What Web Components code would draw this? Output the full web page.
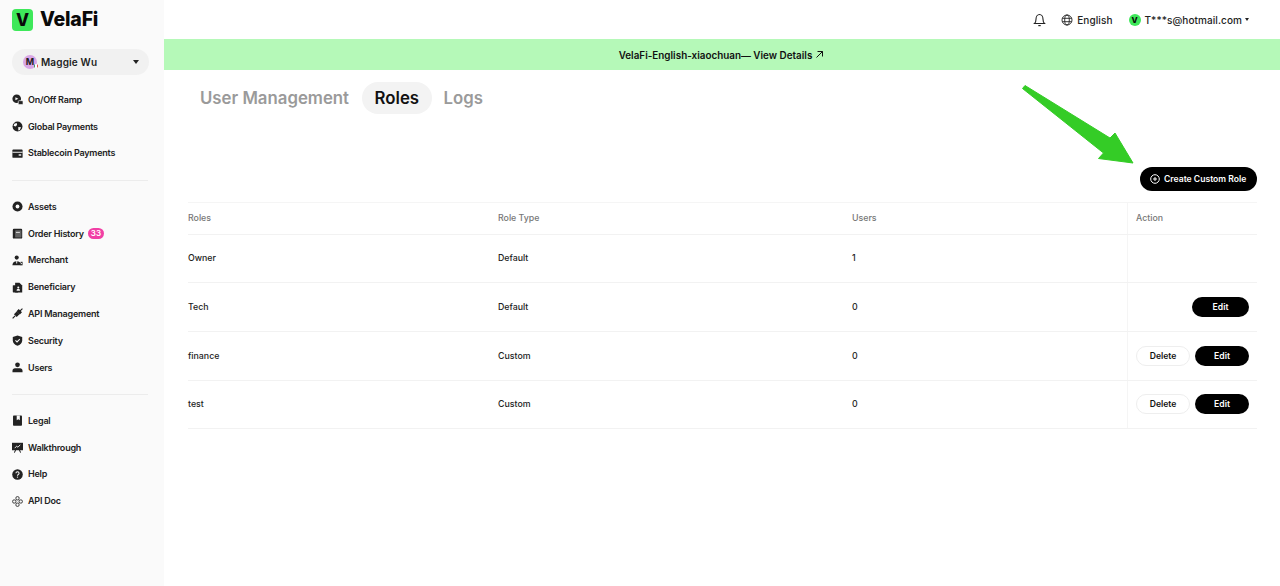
<!DOCTYPE html>
<html lang="en">
<head>
<meta charset="utf-8">
<title>VelaFi Roles</title>
<style>
html, body { margin: 0; height: 100%; }
body { font-family: Inter, "Noto Sans", sans-serif; color: #111; background: #fff; overflow: hidden; }
</style>
</head>
<body>
<app-shell>
  <side-bar slot="side">
    <nav-item icon="ramp">On/Off Ramp</nav-item>
    <nav-item icon="globe">Global Payments</nav-item>
    <nav-item icon="card">Stablecoin Payments</nav-item>
    <nav-rule></nav-rule>
    <nav-item icon="assets">Assets</nav-item>
    <nav-item icon="orders" badge="33">Order History</nav-item>
    <nav-item icon="merchant">Merchant</nav-item>
    <nav-item icon="beneficiary">Beneficiary</nav-item>
    <nav-item icon="api">API Management</nav-item>
    <nav-item icon="shield">Security</nav-item>
    <nav-item icon="user">Users</nav-item>
    <nav-rule></nav-rule>
    <nav-item icon="book">Legal</nav-item>
    <nav-item icon="board">Walkthrough</nav-item>
    <nav-item icon="help">Help</nav-item>
    <nav-item icon="doc">API Doc</nav-item>
  </side-bar>
  <top-bar></top-bar>
  <notice-banner>VelaFi-English-xiaochuan— View Details</notice-banner>
  <roles-page></roles-page>
</app-shell>

<script>
const ICONS = {
  ramp: '<circle cx="6" cy="6" r="5.5"/><path d="M4.300 4 8.100 6 4.300 8z" fill="#fafafa"/><rect x="8" y="8.500" width="6" height="4.800" rx="1" stroke="#fafafa" stroke-width=".8"/>',
  globe: '<circle cx="7" cy="7" r="6.300"/><path d="M3 3.500 6 2.500 6.500 5 4.500 7 2 6zM8 7.500l3.500.5-1.500 3.500-2 .5z" fill="#fafafa"/>',
  card: '<rect x=".5" y="2" width="13" height="10.500" rx="1.200"/><rect x=".5" y="4.800" width="13" height="1.200" fill="#fafafa"/><rect x="8.500" y="8" width="3.200" height="1.800" fill="#fafafa"/>',
  assets: '<circle cx="7" cy="7" r="6.400"/><circle cx="7" cy="7" r="2.400" fill="#fafafa"/>',
  orders: '<rect x="1" y="1" width="12" height="12.500" rx="1.500"/><rect x="4" y="3" width="8" height="9" rx=".6" fill="#fafafa" opacity=".3"/><rect x="5" y="5" width="5" height="1" fill="#fafafa"/>',
  merchant: '<circle cx="6" cy="3.300" r="2.600"/><path d="M.5 13c0-3.200 2.200-5.200 5.500-5.200s5.500 2 5.500 5.200z"/><rect x="5.400" y="7.800" width="1.200" height="3" fill="#fafafa"/><rect x="11.300" y="9" width="2.300" height="3.800" fill="none" stroke="#222" stroke-width=".7"/>',
  beneficiary: '<path d="M4 .8h5.500l3.500 3.500v9H4z"/><rect x="1" y="4" width="7" height="9.300" rx=".8"/><circle cx="8" cy="7" r="1.300" fill="#fafafa"/><path d="M5.800 11c0-1.400 1-2.300 2.200-2.300s2.200.9 2.200 2.300z" fill="#fafafa"/>',
  api: '<path d="M.8 13.300 4 10M10 4l3.300-3.300" stroke="#222" stroke-width="1.500" fill="none"/><path d="M2.500 8 6 4.500 9.500 8 6 11.500zM5.800 4 8.500 1.300 12.700 5.500 10 8.200z"/>',
  shield: '<path d="M7 .5 13 2.600V7c0 3.200-2.600 5.500-6 6.700C3.600 12.500 1 10.200 1 7V2.600z"/><path d="M4.400 6.800 6.400 8.800 9.900 5.200" fill="none" stroke="#fafafa" stroke-width="1.300"/>',
  user: '<circle cx="7" cy="3.600" r="3"/><path d="M.6 13.200V11c0-1.900 1.400-3.200 3.200-3.200h6.400c1.800 0 3.200 1.300 3.200 3.200v2.200z"/>',
  book: '<rect x="1.300" y=".7" width="11.400" height="13" rx="1"/><path d="M6 .7h4v6L8 5.300 6 6.700z" fill="#fafafa"/>',
  board: '<path d="M0 1h14v9.500H0z"/><path d="M3.500 7.800 6 5.200l1.500 1.500L10.500 3.500" fill="none" stroke="#fafafa" stroke-width="1.100"/><path d="M3 13.500l1.600-3.300M11 13.500 9.400 10.200" stroke="#222" stroke-width="1.300"/>',
  help: '<circle cx="7" cy="7" r="6.700"/><path d="M5 5.400C5 4.200 6 3.600 7 3.600s2 .7 2 1.800-.9 1.500-1.400 1.900c-.4.3-.6.6-.6 1.200" fill="none" stroke="#fafafa" stroke-width="1.300"/><circle cx="7" cy="10.300" r=".9" fill="#fafafa"/>',
  doc: '<g fill="none" stroke="#222" stroke-width="1.100"><rect x="5" y=".8" width="4" height="4.200" rx="1.600"/><rect x="5" y="9" width="4" height="4.200" rx="1.600"/><rect x=".8" y="5" width="4.200" height="4" rx="1.600"/><rect x="9" y="5" width="4.200" height="4" rx="1.600"/></g>'
}

class AppShell extends HTMLElement {
  constructor() {
    super()
    this.attachShadow({ mode: 'open' }).innerHTML = `
    <style>
    :host { display: grid; grid-template-columns: 164px 1fr; grid-template-rows: 39px 31px 1fr; height: 586px; }
    ::slotted(side-bar) { grid-row: 1 / 4; }
    </style>
    <slot name="side"></slot>
    <slot></slot>`
  }
}

class SideBar extends HTMLElement {
  constructor() {
    super()
    this.attachShadow({ mode: 'open' }).innerHTML = `
    <style>
    :host { display: block; background: #fafafa; box-sizing: border-box; padding: 8px 12px 0; height: 586px; }
    .logo { display: flex; align-items: center; gap: 7px; height: 23px; margin-bottom: 18px; }
    .mark { width: 21px; height: 22px; border-radius: 4px; background: #3ee85a; color: #0a0a0a; font: 800 17px/22px Inter, sans-serif; text-align: center; }
    .name { font: 800 19.5px/23px Inter, sans-serif; color: #0a0a0a; letter-spacing: -.2px; }
    .account { display: flex; align-items: center; height: 26px; padding: 0 10px 0 11px; border-radius: 13px; background: #f1f1f1; margin-bottom: 11.500px; width: 137px; box-sizing: border-box; }
    .ava { position: relative; width: 14px; height: 14px; border-radius: 50%; background: #d9a6e6; font: 700 9px/14px Inter, sans-serif; text-align: center; color: #222; margin-right: 4px; }
    .ava i { position: absolute; right: -1px; bottom: 1px; width: 4px; height: 4px; border-radius: 50%; background: linear-gradient(90deg,#2a9d4a 33%,#fff 33% 66%,#d33 66%); }
    .who { flex: 1; font: 600 10px/26px Inter, sans-serif; color: #222; letter-spacing: .15px; }
    .caret { width: 0; height: 0; border-left: 3px solid transparent; border-right: 3px solid transparent; border-top: 4px solid #222; }
    </style>
    <div class="logo"><div class="mark">V</div><div class="name">VelaFi</div></div>
    <div class="account"><div class="ava">M<i></i></div><div class="who">Maggie Wu</div><div class="caret"></div></div>
    <slot></slot>`
  }
}

class NavItem extends HTMLElement {
  constructor() {
    super()
    const badge = this.getAttribute('badge')
    this.attachShadow({ mode: 'open' }).innerHTML = `
    <style>
    :host { display: flex; align-items: center; height: 26.8px; font: 600 9px/14px Inter, sans-serif; letter-spacing: -.22px; color: #222; }
    svg { width: 11px; height: 11px; margin-right: 5px; flex: none; fill: #222; }
    b { margin-left: 4px; padding: 0 3px; border-radius: 6px; height: 11px; font: 600 8px/11px Inter, sans-serif; letter-spacing: 0; background: #f13fa5; color: #fff; }
    </style>
    <svg viewBox="0 0 14 14">${ICONS[this.getAttribute('icon')]}</svg><slot></slot>${badge ? `<b>${badge}</b>` : ''}`
  }
}

class NavRule extends HTMLElement {
  constructor() {
    super()
    this.attachShadow({ mode: 'open' }).innerHTML = `
    <style>:host { display: block; height: 1px; background: #ececec; margin: 13px 4px 12.500px 0; }</style>`
  }
}

class TopBar extends HTMLElement {
  constructor() {
    super()
    this.attachShadow({ mode: 'open' }).innerHTML = `
    <style>
    :host { display: flex; align-items: center; justify-content: flex-end; gap: 16px; padding-right: 31px; font: 500 10px/14px Inter, sans-serif; color: #222; letter-spacing: .08px; }
    .set { display: flex; align-items: center; gap: 4px; }
    svg { display: block; fill: none; stroke: #222; }
    .bell { margin-right: -1px; }
    .v { width: 12px; height: 12px; border-radius: 50%; background: #3ee85a; font: 800 8px/12px Inter, sans-serif; text-align: center; color: #0a0a0a; }
    .caret { width: 0; height: 0; border-left: 2.500px solid transparent; border-right: 2.500px solid transparent; border-top: 3.500px solid #222; margin-left: -1px; }
    </style>
    <svg class="bell" width="13" height="14" viewBox="0 0 13 14" stroke-width="1.100"><path d="M1.500 10.500c1-1 1.500-2 1.500-4.300C3 3.500 4.600 1.500 6.500 1.500S10 3.500 10 6.200c0 2.300.5 3.300 1.500 4.300z"/><path d="M5.300 12.600h2.400" stroke-width="1.200"/></svg>
    <div class="set">
      <svg width="12" height="12" viewBox="0 0 12 12" stroke-width=".9"><circle cx="6" cy="6" r="5"/><ellipse cx="6" cy="6" rx="2.300" ry="5"/><path d="M1.300 4.300h9.400M1.300 7.700h9.400"/></svg>
      <span>English</span>
    </div>
    <div class="set"><div class="v">V</div><span>T***s@hotmail.com</span><div class="caret"></div></div>`
  }
}

class NoticeBanner extends HTMLElement {
  constructor() {
    super()
    this.attachShadow({ mode: 'open' }).innerHTML = `
    <style>
    :host { display: flex; align-items: center; justify-content: center; gap: 3px; background: #b5f9b8; font: 600 9.900px/14px Inter, sans-serif; color: #111; padding-right: 1px; }
    svg { fill: none; stroke: #111; stroke-width: 1; }
    </style>
    <slot></slot>
    <svg width="9" height="9" viewBox="0 0 9 9"><path d="M1.500 7.500 7.500 1.500M2.500 1.500h5v5"/></svg>`
  }
}

class PillButton extends HTMLElement {
  constructor() {
    super()
    this.attachShadow({ mode: 'open' }).innerHTML = `
    <style>
    :host { display: inline-flex; align-items: center; justify-content: center; box-sizing: border-box; height: 20px; border-radius: 10px; background: #000; color: #fff; font: 600 8.600px/12px Inter, sans-serif; width: 54px; }
    :host([ghost]) { background: #fff; color: #111; border: 1px solid #eee; }
    :host([wide]) { width: 57px; }
    </style>
    <slot></slot>`
  }
}

class TabBar extends HTMLElement {
  constructor() {
    super()
    this.attachShadow({ mode: 'open' }).innerHTML = `
    <style>
    :host { display: flex; align-items: center; height: 32px; font: 600 16.800px/32px Inter, sans-serif; color: #9a9a9a; }
    span { padding: 0 12px; }
    .on { color: #111; background: #f3f3f3; border-radius: 16px; margin-left: 1px; padding: 0 12.500px; }
    </style>
    <span>User Management</span><span class="on">Roles</span><span>Logs</span>`
  }
}

class RolesTable extends HTMLElement {
  constructor() {
    super()
    const rows = [
      ['Owner', 'Default', '1', ''],
      ['Tech', 'Default', '0', '<pill-button wide>Edit</pill-button>'],
      ['finance', 'Custom', '0', '<pill-button ghost>Delete</pill-button><pill-button>Edit</pill-button>'],
      ['test', 'Custom', '0', '<pill-button ghost>Delete</pill-button><pill-button>Edit</pill-button>']
    ]
    this.attachShadow({ mode: 'open' }).innerHTML = `
    <style>
    :host { display: block; font: 500 8.800px/12px Inter, sans-serif; color: #222; }
    .row { display: grid; grid-template-columns: 310px 354px 275px 1fr; height: 48.700px; border-bottom: 1px solid #f2f2f2; box-sizing: border-box; align-items: center; }
    .head { height: 32.500px; border-top: 1px solid #f5f5f5; color: #777; }
    .act { height: 100%; border-left: 1px solid #f5f5f5; display: flex; align-items: center; justify-content: flex-end; gap: 5px; padding: 0 8px; }
    .head .act { justify-content: flex-start; }
    </style>
    <div class="row head"><div>Roles</div><div>Role Type</div><div>Users</div><div class="act">Action</div></div>
    ${rows.map(r => `<div class="row"><div>${r[0]}</div><div>${r[1]}</div><div>${r[2]}</div><div class="act">${r[3]}</div></div>`).join('')}`
  }
}

class RolesPage extends HTMLElement {
  constructor() {
    super()
    this.attachShadow({ mode: 'open' }).innerHTML = `
    <style>
    :host { display: block; position: relative; padding: 12px 23px 0 24px; }
    .bar { display: flex; justify-content: flex-end; margin: 53px 0 11px; }
    .create { display: flex; align-items: center; gap: 4px; height: 24px; width: 117px; box-sizing: border-box; padding-left: 10px; border-radius: 12px; background: #000; color: #fff; font: 600 8.600px/12px Inter, sans-serif; }
    .create svg { fill: none; stroke: #fff; stroke-width: 1; }
    .arrow { position: absolute; left: 856px; top: 14px; }
    </style>
    <tab-bar></tab-bar>
    <div class="bar">
      <div class="create"><svg width="10" height="10" viewBox="0 0 10 10"><circle cx="5" cy="5" r="4.300"/><path d="M5 3v4M3 5h4"/></svg>Create Custom Role</div>
    </div>
    <roles-table></roles-table>
    <svg class="arrow" width="120" height="84" viewBox="0 0 120 84"><path d="M2.500 4.500 5 1.500 90 54 95 49 113 79 78.500 74.500 83.500 69z" fill="#34cc26" stroke="#34cc26" stroke-width="1" stroke-linejoin="round"/></svg>`
  }
}

customElements.define('app-shell', AppShell)
customElements.define('side-bar', SideBar)
customElements.define('nav-item', NavItem)
customElements.define('nav-rule', NavRule)
customElements.define('top-bar', TopBar)
customElements.define('notice-banner', NoticeBanner)
customElements.define('pill-button', PillButton)
customElements.define('tab-bar', TabBar)
customElements.define('roles-table', RolesTable)
customElements.define('roles-page', RolesPage)
</script>
</body>
</html>
